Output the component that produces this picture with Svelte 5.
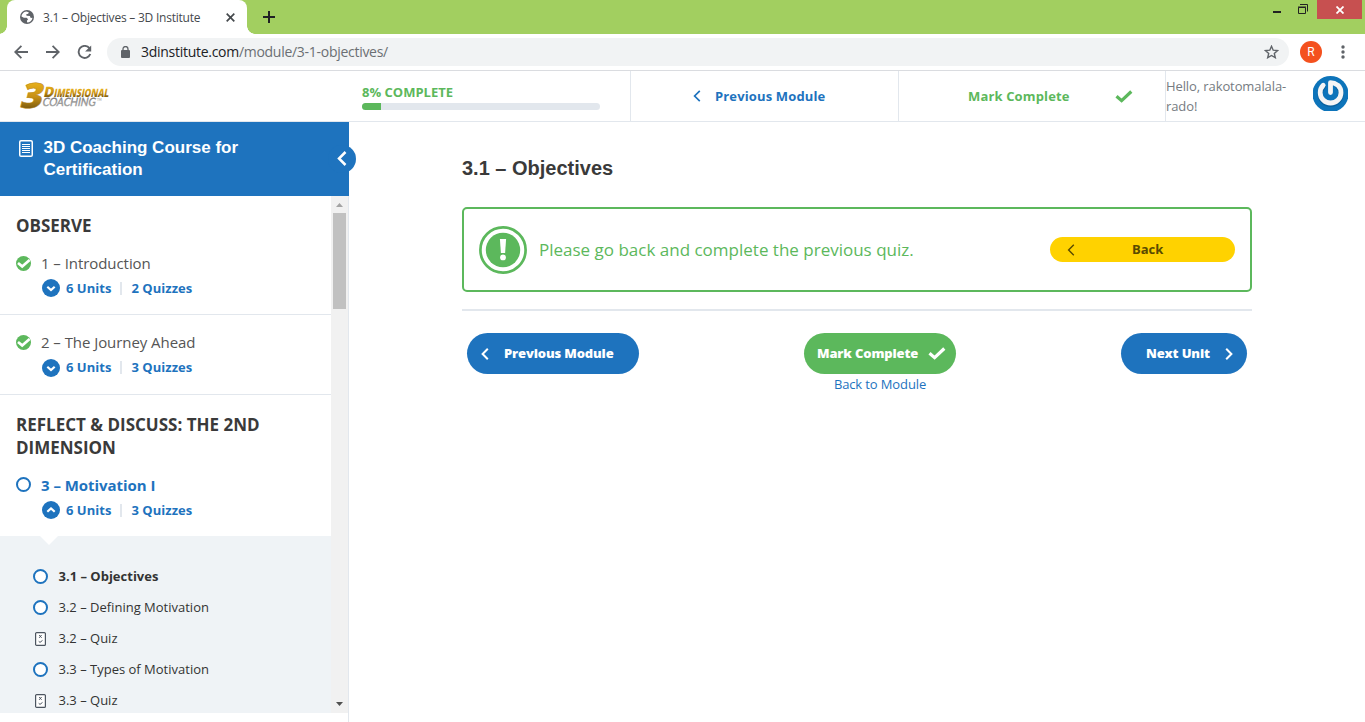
<script>
  const modules = [
    { heading: 'OBSERVE', title: '1 – Introduction', quizzes: 2, state: 'done' },
    { title: '2 – The Journey Ahead', quizzes: 3, state: 'done', tall: true },
    { heading: 'REFLECT & DISCUSS: THE 2ND DIMENSION', title: '3 – Motivation I', quizzes: 3, state: 'open' }
  ];
  const units = [
    { title: '3.1 – Objectives', current: true },
    { title: '3.2 – Defining Motivation' },
    { title: '3.2 – Quiz', quiz: true },
    { title: '3.3 – Types of Motivation' },
    { title: '3.3 – Quiz', quiz: true }
  ];
  const progress = 8;
</script>

{#snippet chevron(dir, w, h, sw)}
  <svg class="chev" width={w} height={h} viewBox="0 0 8 12" fill="none" stroke="currentColor" stroke-width={sw}>
    <path d={dir === 'left' ? 'M6.8 .8 1.6 6l5.2 5.2' : 'M1.2 .8 6.4 6l-5.2 5.2'} />
  </svg>
{/snippet}

{#snippet check()}
  <svg class="check" width="18" height="13" viewBox="0 0 18 13" fill="none" stroke="currentColor" stroke-width="3.2"><path d="M1.5 6.3 6.6 10.6 16.3 1.5" /></svg>
{/snippet}

<div class="window">
  <div class="tabs">
    <div class="tab">
      <svg width="14" height="14" viewBox="0 0 14 14"><circle cx="7" cy="7" r="7" fill="#5f6368" /><path d="M6.2 1.4 8.8 2.3 8.2 3.7 6.2 4.2 6.6 5.7 9.9 6 10.7 8 12.5 7.7C12.1 10.5 9.8 12.5 7.2 12.6L6.9 10.7 8.1 9.3 6.6 7.8 3.9 7.7 1.5 6.6C1.6 4.1 3.7 1.6 6.2 1.4Z" fill="#fff" /></svg>
      <span class="tab-title">3.1 – Objectives – 3D Institute</span>
      <svg class="x" width="9" height="9" viewBox="0 0 9 9" stroke="#45494d" stroke-width="1.7"><path d="M.7.7l7.6 7.6M8.3.7.7 8.3" /></svg>
    </div>
    <svg class="plus" width="12" height="12" viewBox="0 0 12 12" stroke="#202124" stroke-width="2"><path d="M6 0v12M0 6h12" /></svg>
    <div class="controls">
      <svg width="8" height="2"><path d="M0 0h8v2H0z" fill="#222" /></svg>
      <svg class="restore" width="10" height="10" viewBox="0 0 10 10" fill="none" stroke="#222"><path d="M.5 3.5h7v6h-7zM0 3h8M2 .5h7.5v7" /></svg>
      <span class="close"><svg width="8" height="8" viewBox="0 0 8 8" stroke="#fff" stroke-width="1.8"><path d="M.5.5l7 7M7.5.5l-7 7" /></svg></span>
    </div>
  </div>

  <div class="toolbar">
    <svg width="14" height="14" viewBox="0 0 14 14" fill="none" stroke="#5f6368" stroke-width="1.8"><path d="M14 7H1.5M7.4.8 1.2 7l6.2 6.2" /></svg>
    <svg class="fwd" width="14" height="14" viewBox="0 0 14 14" fill="none" stroke="#5f6368" stroke-width="1.8"><path d="M0 7h12.5M6.6.8 12.8 7l-6.2 6.2" /></svg>
    <svg class="reload" width="15" height="15" viewBox="0 0 15 15"><path d="M12.4 3.2A6 6 0 1 0 13.3 9" fill="none" stroke="#5f6368" stroke-width="1.9" /><path d="M14.2.4v6.1H8.1z" fill="#5f6368" /></svg>
    <div class="address">
      <svg width="9" height="12" viewBox="0 0 9 12"><path d="M2 5V3a2.5 2.5 0 0 1 5 0v2" fill="none" stroke="#5f6368" stroke-width="1.3" /><rect y="4" width="9" height="8" rx="1" fill="#5f6368" /></svg>
      <span class="url"><b>3dinstitute.com</b>/module/3-1-objectives/</span>
      <svg class="star" width="15" height="14" viewBox="0 0 15 14" fill="none" stroke="#5f6368" stroke-width="1.4"><path d="M7.5 1.3 9.2 5.2 13.6 5.5 10.3 8.4 11.3 12.7 7.5 10.5 3.7 12.7 4.7 8.4 1.4 5.5 5.8 5.2Z" /></svg>
    </div>
    <span class="profile">R</span>
    <svg class="dots" width="4" height="14" viewBox="0 0 4 14" fill="#5f6368"><circle cx="2" cy="2" r="1.7" /><circle cx="2" cy="7" r="1.7" /><circle cx="2" cy="12" r="1.7" /></svg>
  </div>

  <header>
    <div class="logo">
      <svg width="120" height="48" viewBox="0 0 120 48">
        <defs>
          <linearGradient id="gold" x2="0" y2="1"><stop offset="0.2" stop-color="#ecb51c" /><stop offset=".55" stop-color="#c89115" /><stop offset=".85" stop-color="#71530d" /></linearGradient>
          <linearGradient id="gray" x2="0" y2="1"><stop offset="0.2" stop-color="#666" /><stop offset="1" stop-color="#bbb" /></linearGradient>
        </defs>
        <g font-family="Open Sans" font-weight="800" fill="url(#gold)">
          <text transform="translate(4 36) skewX(-14)" font-size="35" textLength="22" lengthAdjust="spacingAndGlyphs" stroke="#b98614" stroke-width=".5">3</text>
          <text transform="translate(28 25) skewX(-12)" font-size="14.5" textLength="10.5" lengthAdjust="spacingAndGlyphs">D</text>
          <text transform="translate(38.5 25) skewX(-12)" font-size="11.5" textLength="55" lengthAdjust="spacingAndGlyphs">IMENSIONAL</text>
        </g>
        <text transform="translate(27 34) skewX(-12)" font-family="Lato" font-size="11.5" fill="url(#gray)" stroke="#999" stroke-width=".4" textLength="53" lengthAdjust="spacingAndGlyphs">COACHING</text>
        <text x="82" y="28.5" font-family="Lato" font-size="3" fill="#888">TM</text>
      </svg>
    </div>
    <div class="progress">
      <span class="done-label">{progress}% COMPLETE</span>
      <div class="track"><div class="fill" style="width: {progress}%"></div></div>
    </div>
    <div class="head-prev">{@render chevron('left', 8, 12, 1.7)}<span>Previous Module</span></div>
    <div class="head-mark"><span>Mark Complete</span>{@render check()}</div>
    <div class="account">
      <span class="hello">Hello, rakotomalala-<br />rado!</span>
      <svg width="35" height="35" viewBox="0 0 35 35">
        <circle cx="17.5" cy="18" r="18" fill="#0d74ba" />
        <path d="M10.2 9.6A10.4 10.4 0 1 0 25 9.6" transform="translate(0 1)" fill="none" stroke="#074f83" stroke-width="5.4" stroke-linecap="round" opacity=".5" />
        <path d="M10.2 9.3A10.4 10.4 0 1 0 25 9.3Q21.5 6.6 17.5 6.6v10" fill="none" stroke="#f5f5f5" stroke-width="4.8" stroke-linecap="round" stroke-linejoin="round" />
      </svg>
    </div>
  </header>

  <div class="body">
    <aside>
      <div class="course">
        <svg width="14" height="17" viewBox="0 0 14 17" fill="none" stroke="#fff"><rect x=".75" y=".75" width="12.5" height="15.5" rx="1.3" stroke-width="1.5" /><path d="M3 4.5h8M3 6.5h8M3 8.5h8M3 10.5h8M3 12.5h8" stroke-width="1" /></svg>
        <h1>3D Coaching Course for<br />Certification</h1>
        <span class="collapse">{@render chevron('left', 10, 15, 2)}</span>
      </div>
      <div class="scroller">
        <div class="list">
          {#each modules as m}
            {#if m.heading}<h2>{m.heading}</h2>{/if}
            <section class:tall={m.tall} class:open={m.state === 'open'}>
              <div class="row">
                {#if m.state === 'done'}
                  <svg width="15" height="15" viewBox="0 0 15 15"><circle cx="7.5" cy="7.5" r="7.5" fill="#5cb85c" /><path d="M2 7 6.2 10.4 13.6 3.9" fill="none" stroke="#fff" stroke-width="2.7" /></svg>
                {:else}
                  <span class="ring"></span>
                {/if}
                <span>{m.title}</span>
              </div>
              <div class="meta">
                <svg width="18" height="18" viewBox="0 0 18 18"><circle cx="9" cy="9" r="9" fill="#1e73be" /><path d={m.state === 'open' ? 'M5.3 10.7 9 7.4l3.7 3.3' : 'M5.3 7.7 9 11l3.7-3.3'} fill="none" stroke="#fff" stroke-width="2.2" /></svg>
                <b>6 Units</b><i></i><b>{m.quizzes} Quizzes</b>
              </div>
            </section>
          {/each}
          <ul>
            {#each units as u}
              <li class:current={u.current}>
                {#if u.quiz}
                  <svg class="quiz" width="11" height="14" viewBox="0 0 11 14" fill="none" stroke="#4c5560"><rect x=".6" y=".6" width="9.8" height="12.8" rx="1" stroke-width="1.2" /><path d="M4.2 3l2.4 2.8M6.6 3 4.2 5.8M3.7 9.3l1.3 1.1 2.5-2" /></svg>
                {:else}
                  <span class="ring"></span>
                {/if}
                <span class="name">{u.title}</span>
              </li>
            {/each}
          </ul>
        </div>
        <div class="scrollbar">
          <svg width="7" height="4"><path d="M0 4 3.5 0 7 4z" fill="#a3a3a3" /></svg>
          <div class="thumb"></div>
          <svg class="down" width="7" height="4"><path d="M0 0h7L3.5 4z" fill="#505050" /></svg>
        </div>
      </div>
    </aside>

    <main>
      <h3>3.1 – Objectives</h3>
      <div class="notice">
        <svg width="48" height="48" viewBox="0 0 48 48"><circle cx="24" cy="24" r="22.6" fill="none" stroke="#5cb85c" stroke-width="2.7" /><circle cx="24" cy="24" r="17.2" fill="#5cb85c" /><path d="M20.9 13h6.2l-1 14h-4.2z" fill="#fff" /><circle cx="24" cy="31.4" r="2.9" fill="#fff" /></svg>
        <p>Please go back and complete the previous quiz.</p>
        <div class="back">{@render chevron('left', 8, 12, 1.4)}<span>Back</span></div>
      </div>
      <hr />
      <div class="actions">
        <div class="btn prev">{@render chevron('left', 8, 12, 2)}<span>Previous Module</span></div>
        <div class="middle">
          <div class="btn mark"><span>Mark Complete</span>{@render check()}</div>
          <span class="to-module">Back to Module</span>
        </div>
        <div class="btn next"><span>Next Unit</span>{@render chevron('right', 8, 12, 2)}</div>
      </div>
    </main>
  </div>
</div>

<style>
  :global(body) { margin: 0; overflow: hidden; }
  * { box-sizing: border-box; }
  svg { flex: none; display: block; }
  span, b { white-space: nowrap; }
  .window { width: 1365px; height: 722px; background: #fff; font-family: "Open Sans", sans-serif; display: flex; flex-direction: column; overflow: hidden; }
  .tabs { height: 34px; flex: none; background: #a2cf60; display: flex; padding-left: 7px; }
  .tab { position: relative; width: 240px; background: #fff; border-radius: 8px 8px 0 0; display: flex; align-items: center; padding: 0 12px 0 13px; }
  .tab::before, .tab::after { content: ''; position: absolute; bottom: 0; width: 8px; height: 8px; }
  .tab::before { left: -8px; background: radial-gradient(circle at 0 0, transparent 7.5px, #fff 8px); }
  .tab::after { right: -8px; background: radial-gradient(circle at 100% 0, transparent 7.5px, #fff 8px); }
  .tab-title { font-size: 12px; color: #45494d; margin-left: 9px; letter-spacing: -.23px; }
  .x { margin-left: auto; }
  .plus { margin: 11px 0 0 16px; }
  .controls { margin-left: auto; display: flex; height: 19px; padding-right: 3px; }
  .controls > svg:first-child { margin-top: 11px; }
  .restore { margin: 4px 9px 0 17px; }
  .close { width: 45px; background: #c75050; display: grid; place-items: center; }
  .toolbar { height: 37px; flex: none; border-bottom: 1px solid #dadce0; display: flex; align-items: center; padding-left: 14px; }
  .fwd { margin-left: 18px; }
  .reload { margin-left: 17px; }
  .address { width: 1182px; height: 28px; margin-left: 15px; border-radius: 14px; background: #f1f3f4; display: flex; align-items: center; padding: 0 10px 0 14px; }
  .url { font-size: 14px; line-height: 20px; color: #6b6f73; margin-left: 11px; letter-spacing: -.28px; }
  .url b { font-weight: 400; color: #202124; }
  .star { margin-left: auto; }
  .profile { width: 22px; height: 22px; border-radius: 50%; background: #f4511e; color: #fff; font: 12px/22px Roboto, sans-serif; text-align: center; margin-left: 11px; }
  .dots { margin-left: 19px; }
  header { height: 51px; flex: none; border-bottom: 1px solid #e2e7ed; display: flex; }
  .logo { width: 349px; padding: 1px 0 0 15px; }
  .progress { width: 281px; padding: 12px 0 0 13px; }
  .done-label { display: block; font-size: 13px; line-height: 19px; font-weight: 700; color: #5cb85c; }
  .track { width: 238px; height: 7px; margin-top: 1px; border-radius: 4px; background: #e2e7ed; overflow: hidden; }
  .fill { height: 100%; background: #5cb85c; }
  .head-prev, .head-mark { width: 268px; border-left: 1px solid #e2e7ed; display: flex; align-items: center; font-size: 13px; font-weight: 700; color: #1e73be; padding-left: 62px; letter-spacing: .14px; }
  .head-prev span { margin-left: 14px; }
  .head-mark { width: 267px; color: #5cb85c; padding-left: 69px; }
  .head-mark .check { margin-left: 45px; }
  .account { flex: 1; border-left: 1px solid #e2e7ed; display: flex; }
  .hello { font-size: 13px; line-height: 20px; color: #757b81; padding-top: 5px; width: 147px; letter-spacing: -.1px; }
  .account svg { margin-top: 5px; }
  .body { flex: 1; display: flex; min-height: 0; }
  aside { width: 349px; flex: none; border-right: 1px solid #e2e7ed; }
  .course { position: relative; width: 349px; height: 74px; background: #1e73be; display: flex; padding: 15px 0 0 19px; color: #fff; }
  .course > svg { margin-top: 3px; }
  h1 { margin: 0 0 0 10.5px; font: bold 17px/22px "Liberation Sans", sans-serif; }
  .collapse { position: absolute; right: -7px; top: 23px; width: 28px; height: 28px; border-radius: 50%; background: #1e73be; padding: 6px 0 0 9px; }
  .scroller { height: 517px; display: flex; overflow: hidden; }
  .list { width: 331px; overflow: hidden; }
  h2 { margin: 0 0 -1px; padding: 18px 16px 0; font-size: 17px; line-height: 23px; font-weight: 700; color: #3a3a3a; }
  section { height: 79px; border-bottom: 1px solid #e2e7ed; padding: 16px 0 0 16px; }
  section.tall { height: 80px; }
  section.open { height: 78px; border: 0; }
  .row { height: 22px; margin-bottom: 2px; display: flex; align-items: center; gap: 10px; font-size: 15px; color: #555; letter-spacing: -.06px; }
  .tall .meta svg { margin-top: 1px; }
  .open .row { color: #1e73be; font-weight: 700; height: 21px; margin-bottom: 3px; letter-spacing: -.04px; }
  .open .row span:last-child { padding-top: 1px; }
  .meta { height: 24px; display: flex; align-items: center; padding-left: 26px; font-size: 13px; color: #1e73be; letter-spacing: .03px; }
  .meta b { margin-left: 6px; font-weight: 700; }
  .meta i { width: 2px; height: 13px; background: #e2e7ed; margin: 0 3px 0 9px; }
  .ring { width: 15px; height: 15px; border: 2px solid #1e73be; border-radius: 50%; flex: none; }
  ul { position: relative; margin: 0; padding: 25px 0 0 33px; background: #eff3f6; list-style: none; }
  ul::before { content: ''; position: absolute; left: 40px; top: 0; border: 9px solid transparent; border-top-color: #fff; border-bottom: 0; }
  li { height: 31px; display: flex; align-items: center; gap: 10.5px; font-size: 13px; color: #333; }
  li .name { padding-bottom: 2px; }
  li .ring { background: #fff; }
  li.current { font-weight: 700; }
  .quiz { margin: 0 2px; background: #fff; }
  .scrollbar { width: 17px; background: #f1f1f1; padding: 7px 2px 7px; display: flex; flex-direction: column; }
  .scrollbar svg { margin-left: 3px; }
  .thumb { width: 13px; height: 96px; margin-top: 6px; background: #c1c1c1; }
  .scrollbar .down { margin-top: auto; }
  main { margin-left: 113px; width: 790px; padding-top: 33px; }
  h3 { margin: 0; font: bold 20px/26px "Liberation Sans", sans-serif; color: #3a3a3a; }
  .notice { height: 85px; margin-top: 26px; border: 2px solid #5cb85c; border-radius: 5px; display: flex; align-items: center; padding: 0 15px; }
  .notice p { margin: 0 0 0 12px; font-size: 17px; color: #5cb85c; white-space: nowrap; }
  .back { width: 185px; height: 25px; margin-left: auto; border-radius: 13px; background: #ffd200; color: #594a00; font-size: 13px; font-weight: 700; display: flex; align-items: center; padding-left: 17px; }
  .back span { margin-left: 57px; padding-bottom: 2px; }
  hr { margin: 17px 0 22px; border: 0; height: 2px; background: #e2e7ed; }
  .actions { display: flex; justify-content: space-between; padding: 0 5px; }
  .btn { height: 41px; border-radius: 21px; background: #1e73be; color: #fff; font-size: 13px; font-weight: 800; display: flex; align-items: center; letter-spacing: -.15px; }
  .btn span { padding-bottom: 2px; }
  .prev { width: 172px; padding-left: 14px; }
  .prev span { margin-left: 15px; }
  .middle { width: 152px; display: flex; flex-direction: column; align-items: center; }
  .mark { width: 152px; background: #5cb85c; padding-left: 13px; }
  .mark .check { margin-left: 10px; }
  .to-module { font-size: 13px; line-height: 21px; color: #1e73be; letter-spacing: -.12px; }
  .next { width: 126px; padding-left: 25px; }
  .next .chev { margin-left: 15px; }
</style>
